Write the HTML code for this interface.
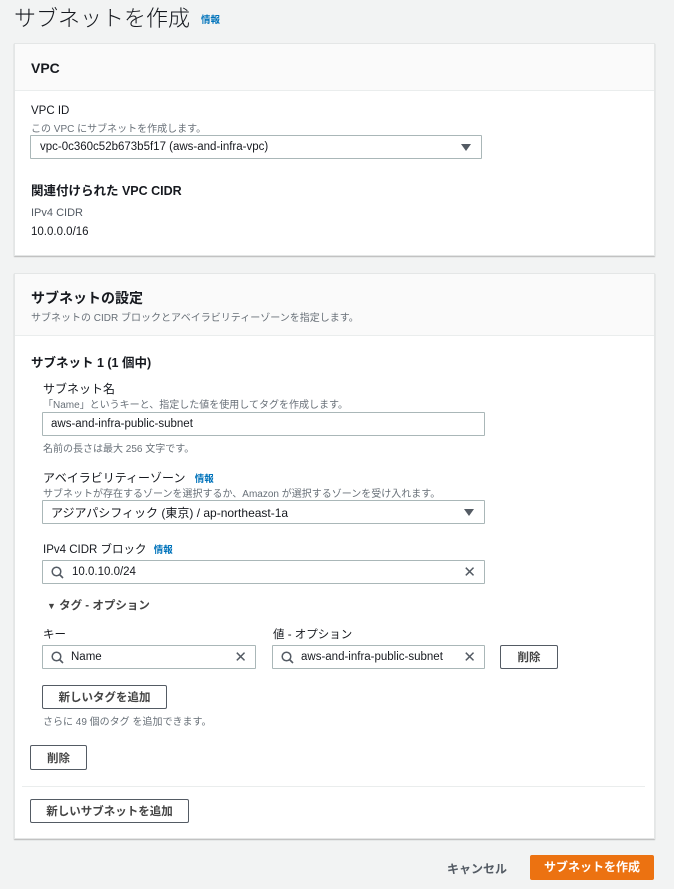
<!DOCTYPE html>
<html><head><meta charset="utf-8"><style>
*{box-sizing:border-box;margin:0;padding:0}
body{width:674px;height:889px;background:#f2f3f3;font-family:"Liberation Sans","Noto Sans CJK JP",sans-serif;color:#16191f;position:relative;overflow:hidden;font-size:12px}
.a{position:absolute;white-space:nowrap}
.panel{position:absolute;left:14px;width:641px;background:#fff;border:1px solid #e4e6e6;box-shadow:0 1px 1px rgba(0,0,0,.25)}
.hd{position:absolute;left:0;right:0;top:0;background:#fafafa;border-bottom:1px solid #eaeded}
.in{position:absolute;border:1px solid #aab7b8;background:#fff;height:24px;font-size:11.5px;display:flex;align-items:center;padding-left:10px;border-radius:1px;white-space:nowrap}
.btn{position:absolute;border:1px solid #545b64;background:#fff;height:24px;font-size:11.5px;font-weight:bold;display:flex;align-items:center;justify-content:center;color:#444;border-radius:2px}
.gray{color:#687078;font-size:10px}
.info{color:#0073bb;font-size:9.5px;font-weight:bold}
.tri{position:absolute;right:10px;top:8px;width:0;height:0;border-left:5px solid transparent;border-right:5px solid transparent;border-top:7px solid #545b64}
.x{position:absolute;right:8px;top:2px;font-size:15px;color:#545b64}
.q{position:absolute;left:8px;top:5px}
</style></head><body>
<div class="a" style="left:14px;top:1px;font-size:22px;font-weight:300;color:#16191f">サブネットを作成</div>
<div class="a info" style="left:201px;top:12px">情報</div>

<div class="panel" style="top:43px;height:213px">
 <div class="hd" style="height:47px"></div>
 <div class="a" style="left:16px;top:16px;font-size:14px;font-weight:bold">VPC</div>
 <div class="a" style="left:16px;top:61px;font-size:11.5px">VPC ID</div>
 <div class="a gray" style="left:16px;top:76px">この VPC にサブネットを作成します。</div>
 <div class="in" style="left:15px;top:91px;width:452px;padding-left:9px">vpc-0c360c52b673b5f17 (aws-and-infra-vpc)<div class="tri"></div></div>
 <div class="a" style="left:16px;top:136px;font-size:12.5px;font-weight:bold">関連付けられた VPC CIDR</div>
 <div class="a" style="left:16px;top:163px;font-size:11px;color:#545b64">IPv4 CIDR</div>
 <div class="a" style="left:16px;top:182px;font-size:11.5px">10.0.0.0/16</div>
</div>

<div class="panel" style="top:273px;height:566px">
 <div class="hd" style="height:62px"></div>
 <div class="a" style="left:16px;top:14px;font-size:14px;font-weight:bold">サブネットの設定</div>
 <div class="a gray" style="left:16px;top:35px">サブネットの CIDR ブロックとアベイラビリティーゾーンを指定します。</div>
 <div class="a" style="left:16px;top:78px;font-size:12.5px;font-weight:bold">サブネット 1 (1 個中)</div>
 <div class="a" style="left:28px;top:106px;font-size:12px">サブネット名</div>
 <div class="a gray" style="left:28px;top:122px">「Name」というキーと、指定した値を使用してタグを作成します。</div>
 <div class="in" style="left:27px;top:138px;width:443px;padding-left:8px">aws-and-infra-public-subnet</div>
 <div class="a gray" style="left:28px;top:166px">名前の長さは最大 256 文字です。</div>
 <div class="a" style="left:28px;top:195px;font-size:12px">アベイラビリティーゾーン <span class="info" style="margin-left:6px">情報</span></div>
 <div class="a gray" style="left:28px;top:211px">サブネットが存在するゾーンを選択するか、Amazon が選択するゾーンを受け入れます。</div>
 <div class="in" style="left:27px;top:226px;width:443px;padding-left:8px;font-size:12px">アジアパシフィック (東京) / ap-northeast-1a<div class="tri"></div></div>
 <div class="a" style="left:28px;top:267px;font-size:11.5px">IPv4 CIDR ブロック <span class="info" style="margin-left:4px">情報</span></div>
 <div class="in" style="left:27px;top:286px;width:443px;padding-left:29px"><svg class="q" width="13" height="13" viewBox="0 0 13 13"><circle cx="5.5" cy="5.5" r="4.3" fill="none" stroke="#545b64" stroke-width="1.5"/><path d="M8.5 8.5L12 12" stroke="#545b64" stroke-width="1.6"/></svg>10.0.10.0/24<span class="x">✕</span></div>
 <div class="a" style="left:32px;top:323px;font-size:11.5px;font-weight:bold;color:#444"><span style="font-size:9px">▼</span> タグ - オプション</div>
 <div class="a" style="left:28px;top:352px;font-size:11.5px">キー</div>
 <div class="a" style="left:258px;top:352px;font-size:11.5px">値 - オプション</div>
 <div class="in" style="left:27px;top:371px;width:214px;padding-left:28px"><svg class="q" width="13" height="13" viewBox="0 0 13 13"><circle cx="5.5" cy="5.5" r="4.3" fill="none" stroke="#545b64" stroke-width="1.5"/><path d="M8.5 8.5L12 12" stroke="#545b64" stroke-width="1.6"/></svg>Name<span class="x">✕</span></div>
 <div class="in" style="left:257px;top:371px;width:213px;padding-left:28px"><svg class="q" width="13" height="13" viewBox="0 0 13 13"><circle cx="5.5" cy="5.5" r="4.3" fill="none" stroke="#545b64" stroke-width="1.5"/><path d="M8.5 8.5L12 12" stroke="#545b64" stroke-width="1.6"/></svg>aws-and-infra-public-subnet<span class="x">✕</span></div>
 <div class="btn" style="left:485px;top:371px;width:58px">削除</div>
 <div class="btn" style="left:27px;top:411px;width:125px">新しいタグを追加</div>
 <div class="a gray" style="left:28px;top:439px">さらに 49 個のタグ を追加できます。</div>
 <div class="btn" style="left:15px;top:471px;width:57px;height:25px">削除</div>
 <div style="position:absolute;left:7px;right:9px;top:512px;border-top:1px solid #eaeded"></div>
 <div class="btn" style="left:15px;top:525px;width:159px">新しいサブネットを追加</div>
</div>

<div class="a" style="left:447px;top:860px;font-size:12px;font-weight:bold;color:#545b64">キャンセル</div>
<div class="a" style="left:530px;top:855px;width:124px;height:25px;background:#ec7211;color:#fff;font-size:12px;font-weight:bold;text-align:center;line-height:25px;border-radius:2px">サブネットを作成</div>
</body></html>
